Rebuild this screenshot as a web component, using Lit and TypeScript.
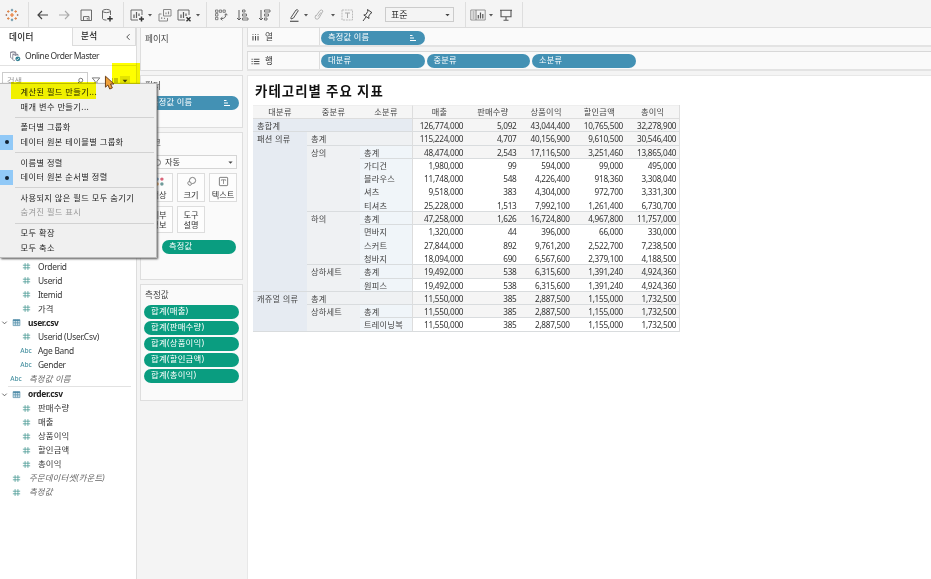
import { LitElement, html, svg, css, nothing } from "lit";
import { customElement, property } from "lit/decorators.js";
import { classMap } from "lit/directives/class-map.js";

const G = "#5c5c5c";

const icons: Record<string, unknown> = {
  logo: svg`<g stroke="#e8762d" stroke-width="1.100"><path d="M8 6v4M6 8h4"/></g>
    <g stroke="#5b879b" stroke-width="1"><path d="M8 1.800v2.600M6.800 3.100h2.400M8 11.600v2.600M6.800 12.900h2.400"/></g>
    <g stroke="#e0864a" stroke-width="1"><path d="M4.300 3.200v2.600M3 4.500h2.600M11.700 3.200v2.600M10.400 4.500h2.600M4.300 10.200v2.600M3 11.500h2.600M11.700 10.200v2.600M10.400 11.500h2.600"/></g>
    <g stroke="#a87f70" stroke-width="1"><path d="M2.400 7v2M1.600 8h1.600M13.600 7v2M12.800 8h1.600"/></g>`,
  back: svg`<path d="M13 8H3M7 4L3 8l4 4" stroke="#444" stroke-width="1.200"/>`,
  fwd: svg`<path d="M3 8h10M9 4l4 4-4 4" stroke="#aaa" stroke-width="1.100"/>`,
  save: svg`<path d="M3 3h10.500v10.500H3zM5.500 13.200v-3.600h5.500v3.600M9.300 11v1.500" stroke="${G}" stroke-width=".9"/>`,
  db: svg`<path d="M3.500 4v7.500c0 1 2 1.600 4 1.600M11.500 4v4" stroke="${G}" stroke-width=".9"/><ellipse cx="7.500" cy="4" rx="4" ry="1.600" stroke="${G}" stroke-width=".9"/><path d="M11 9v5.400M8.300 11.700h5.400" stroke="#333" stroke-width="1.400"/>`,
  chartPlus: svg`<path d="M13 8V3H2v10h7" stroke="${G}" stroke-width=".9"/><path d="M5 11V7.500M7.500 11V5M10 9V6.500" stroke="${G}" stroke-width="1.200"/><path d="M12.500 9.400v5M10 12h5" stroke="#333" stroke-width="1.500"/>`,
  dup: svg`<path d="M6.500 2.500h7.500v6.500H6.500zM4.500 7H2v7h8.500V11" stroke="#888"/><path d="M9 7.300V5.500M11.500 7.300V4.500M4.700 12v-1.800M7.500 12V10.800" stroke="#888" stroke-width="1.100"/>`,
  chartX: svg`<path d="M13 8V3H2v10h7" stroke="${G}" stroke-width=".9"/><path d="M5 11V7.500M7.500 11V5M10 9V6.500" stroke="${G}" stroke-width="1.200"/><path d="M10.500 10.200l4 4M14.500 10.200l-4 4" stroke="#333" stroke-width="1.400"/>`,
  swap: svg`<path d="M2.500 3h2.400v2.300H2.500zM6.300 3h2.300v2.300H6.300zM10 3h2.300v2.300H10zM2.500 6.600h2.400V9H2.500zM2.500 10.300h2.400v2.400H2.500z" stroke="#666" stroke-width=".8"/><path d="M13 7c0 3-1.500 4.700-5 4.700M11.600 8.200L13 6.600l1.400 1.600M9.400 10.200L7.600 11.700l1.800 1.600" stroke="#666"/>`,
  sortAsc: svg`<path d="M4 3v10M2 11l2 2 2-2" stroke="${G}"/><path d="M7.500 3h2.500v2H7.500zM7.500 7h4v2h-4zM7.500 11h5.500v2H7.500z" stroke="#666" stroke-width=".9"/>`,
  sortDesc: svg`<path d="M4 3v10M2 11l2 2 2-2" stroke="${G}"/><path d="M7.500 3H13v2H7.500zM7.500 7h4v2h-4zM7.500 11H10v2H7.500z" stroke="#666" stroke-width=".9"/>`,
  pencil: svg`<path d="M5 10.500L10 3q1.400-.9 2.300.6L7.500 11 5 12z" stroke="#555"/><path d="M4 14.300h8.500" stroke="#555" stroke-width="1.200"/>`,
  clip: svg`<path d="M5 9l4-5.500q1.800-1.300 3 .5L8 11q-1.600 2-3.400.8Q3.300 10.400 5 8M7 9.500l3-4.200" stroke="#b5b5b5"/>`,
  text: svg`<path d="M3 3h10.500v10H3z" stroke="#bbb" stroke-dasharray="2 .8"/><path d="M6 6h5M8.500 6V11" stroke="#aaa"/>`,
  pin: svg`<path d="M8.500 2.500l4.500 3.200-1.300.5-2 3 .3 2.300L4.800 8l2-.4 2-3.200zM7 10l-3 4" stroke="#444"/>`,
  show: svg`<path d="M.8 3h14.400v10H.8z" stroke="#888" stroke-width=".9"/><path d="M2.500 5h2M2.500 7h2M2.500 9h2M2.500 11h2M6 3v10" stroke="#777" stroke-width=".9"/><path d="M8.300 11.500V8M10.500 11.500V5.500M12.800 11.500V7" stroke="#555" stroke-width="1.200"/>`,
  present: svg`<path d="M2 3.300h12M3 3.300v6.500h10V3.300M8 10v3M5.500 13.300h5" stroke="#555" stroke-width="1.100"/>`,
  caret: svg`<path d="M6 7h4L8 9.400z" fill="#555" stroke="none"/>`,
  caretBig: svg`<path d="M4.200 6h7.600L8 10.400z" fill="#444" stroke="none"/>`,
  chevL: svg`<path d="M10.500 3.500L6 8l4.500 4.500" stroke="#555" stroke-width="1.600"/>`,
  chevD: svg`<path d="M3 6l5 5 5-5" stroke="#555" stroke-width="2"/>`,
  source: svg`<path d="M2 3q3.500-2 7 0v5M2 3v7q1 1 3 1M2 3q3.500 1.800 7 0M5 6q3.500-1.500 7 0v2M5 6v7q1 1 3 1M5 6q3.500 1.800 7 0" stroke="#778"/><circle cx="11.800" cy="11.800" r="3.300" fill="#2f7f93" stroke="none"/><path d="M10 11.800l1.300 1.300 2.200-2.600" stroke="#fff"/>`,
  search: svg`<circle cx="9.500" cy="6.500" r="4" stroke="#555" stroke-width="1.500"/><path d="M6.500 9.500L2 14" stroke="#555" stroke-width="1.700"/>`,
  filter: svg`<path d="M2 3h12L9.500 8.500V14L6.500 12V8.500z" stroke="#555" stroke-width="1.200"/>`,
  list: svg`<path d="M2 4h2M2 8h2M2 12h2M6 4h8M6 8h8M6 12h8" stroke="#666" stroke-width="1.500"/>`,
  cols: svg`<path d="M3.500 5.500v8M8 5.500v8M12.500 5.500v8M3.500 2v1.700M8 2v1.700M12.500 2v1.700" stroke="#444" stroke-width="1.800"/>`,
  rows: svg`<path d="M1 4h2M1 8h2M1 12h2M5 4h10M5 8h10M5 12h10" stroke="#444" stroke-width="1.700"/>`,
  sortW: svg`<path d="M2 3h5M2 8h8M2 13h12" stroke="#fff" stroke-width="2.200"/>`,
  hash: svg`<path d="M5.500 2v12M10.500 2v12M1.500 5.700h13M1.500 10.300h13" stroke="#4a9a94" stroke-width="1.400"/>`,
  table: svg`<path d="M2 3h12v10.500H2zM2 8.500h12M6 3v10M10 3v10" stroke="#5b93ad" stroke-width="1.300" fill="#cfe2ea"/><path d="M2 4h12" stroke="#4685a3" stroke-width="2.200"/>`,
  color: svg`<g stroke="none"><circle cx="4.500" cy="4.500" r="2.500" fill="#5a8fc0"/><circle cx="11.500" cy="4.500" r="2.500" fill="#d9657a"/><circle cx="4.500" cy="11.500" r="2.500" fill="#e59a4a"/><circle cx="11.500" cy="11.500" r="2.500" fill="#6f9b9a"/></g>`,
  size: svg`<circle cx="9.500" cy="6.500" r="4.500" stroke="#666" stroke-width="1.200"/><path d="M5.300 7.500A3 3 0 1 0 8.300 12" stroke="#666" stroke-width="1.200"/>`,
  label: svg`<rect x="2" y="2" width="12" height="12" rx="1" stroke="#666" stroke-width="1.200"/><path d="M5 5.500h6M8 5.500V11.500M5 5.500v1.300M11 5.500v1.300" stroke="#666"/>`,
  cursor: svg`<path d="M3-1v13.500l3-2.700 2.300 5 3.200-1.400-2.200-4.800h4.200z" fill="#f0a13a" stroke="#6b3d14" stroke-width="1.200"/>`,
};

@customElement("ui-icon")
class UiIcon extends LitElement {
  @property() name = "";
  static styles = css`
    :host { display: inline-flex; flex: none; width: 14px; height: 14px; }
    svg { width: 100%; height: 100%; fill: none; overflow: visible; }
  `;
  render() {
    return html`<svg viewBox="0 0 16 16">${icons[this.name] ?? nothing}</svg>`;
  }
}

@customElement("field-pill")
class FieldPill extends LitElement {
  @property() label = "";
  @property({ type: Boolean }) sorted = false;
  static styles = css`
    :host {
      display: flex; align-items: center; justify-content: space-between; box-sizing: border-box;
      height: 14px; border-radius: 7px; padding: 0 8px 0 7px; color: #fff;
      background: #4391b4; line-height: 14px; white-space: nowrap; letter-spacing: .25px;
    }
    :host([measure]) { background: #0a9d80; }
    .lbl { position: relative; top: -1px; }
    ui-icon { width: 8px; height: 8px; }
  `;
  render() {
    return html`<span class="lbl">${this.label}</span>${this.sorted ? html`<ui-icon name="sortW"></ui-icon>` : nothing}`;
  }
}

const TOOLBAR = ["logo", "|", "back", "fwd", "save", "db", "|", "chartPlus", "caret", "dup", "chartX", "caret", "|",
  "swap", "sortAsc", "sortDesc", "|", "pencil", "caret", "clip", "caret", "text", "pin", "select", "|", "show", "caret", "present", "|"];

type MenuItem = { t: string; on?: boolean; off?: boolean } | null;
const MENU: MenuItem[] = [
  { t: "계산된 필드 만들기..." }, { t: "매개 변수 만들기..." }, null,
  { t: "폴더별 그룹화" }, { t: "데이터 원본 테이블별 그룹화", on: true }, null,
  { t: "이름별 정렬" }, { t: "데이터 원본 순서별 정렬", on: true }, null,
  { t: "사용되지 않은 필드 모두 숨기기" }, { t: "숨겨진 필드 표시", off: true }, null,
  { t: "모두 확장" }, { t: "모두 축소" },
];

const FIELDS: [string, string][] = [
  ["num lat", "Orderid"], ["num lat", "Userid"], ["num lat", "Itemid"], ["num", "가격"],
  ["group", "user.csv"], ["num lat", "Userid (User.Csv)"], ["abc lat", "Age Band"], ["abc lat", "Gender"], ["abc top", "측정값 이름"],
  ["line", ""], ["group", "order.csv"], ["num", "판매수량"], ["num", "매출"], ["num", "상품이익"], ["num", "할인금액"], ["num", "총이익"],
  ["num top", "주문데이터셋(카운트)"], ["num top", "측정값"],
];

// [first, second, third level, level at which the bottom rule starts, values]
const ROWS: [string, string, string, number, string][] = [
  ["총합계", "", "", 0, "126,774,000 5,092 43,044,400 10,765,500 32,278,900"],
  ["패션 의류", "총계", "", 1, "115,224,000 4,707 40,156,900 9,610,500 30,546,400"],
  ["", "상의", "총계", 2, "48,474,000 2,543 17,116,500 3,251,460 13,865,040"],
  ["", "", "가디건", 9, "1,980,000 99 594,000 99,000 495,000"],
  ["", "", "블라우스", 9, "11,748,000 548 4,226,400 918,360 3,308,040"],
  ["", "", "셔츠", 9, "9,518,000 383 4,304,000 972,700 3,331,300"],
  ["", "", "티셔츠", 1, "25,228,000 1,513 7,992,100 1,261,400 6,730,700"],
  ["", "하의", "총계", 2, "47,258,000 1,626 16,724,800 4,967,800 11,757,000"],
  ["", "", "면바지", 9, "1,320,000 44 396,000 66,000 330,000"],
  ["", "", "스커트", 9, "27,844,000 892 9,761,200 2,522,700 7,238,500"],
  ["", "", "청바지", 1, "18,094,000 690 6,567,600 2,379,100 4,188,500"],
  ["", "상하세트", "총계", 2, "19,492,000 538 6,315,600 1,391,240 4,924,360"],
  ["", "", "원피스", 0, "19,492,000 538 6,315,600 1,391,240 4,924,360"],
  ["캐쥬얼 의류", "총계", "", 1, "11,550,000 385 2,887,500 1,155,000 1,732,500"],
  ["", "상하세트", "총계", 2, "11,550,000 385 2,887,500 1,155,000 1,732,500"],
  ["", "", "트레이닝복", 0, "11,550,000 385 2,887,500 1,155,000 1,732,500"],
];
const HEAD = ["대분류", "중분류", "소분류", "매출", "판매수량", "상품이익", "할인금액", "총이익"];

@customElement("app-root")
class AppRoot extends LitElement {
  static styles = css`
    :host {
      display: flex; flex-direction: column; position: relative; width: 931px; height: 579px; overflow: hidden;
      background: #f4f4f4; color: #333; font: 8.2px/14px "Noto Sans", "Noto Sans CJK KR", sans-serif; white-space: nowrap;
    }
    * { box-sizing: border-box; }
    .toolbar {
      flex: none; height: 28px; display: grid; align-items: center; justify-items: center; padding-top: 2px;
      border-bottom: 1px solid #dcdcdc; background: #f4f4f4;
      grid-template-columns: 24px 8px 22px 20px 23px 20px 12px 15px 12px 17px 21px 8px 9px 19px 25px 19px 10px 20px 4px 22px 6px 22px 18px 87px 4px 22px 4px 26px 6px;
    }
    .toolbar > ui-icon { width: 16px; height: 16px; }
    .sep { width: 1px; height: 25px; background: #dedede; }
    .fit { width: 69px; height: 15px; border: 1px solid #ccc; display: flex; align-items: center; justify-content: space-between; padding: 0 1px 0 5px; font-size: 9px; }
    .fit ui-icon { width: 9px; }
    .body { flex: 1; display: flex; min-height: 0; }

    .data { width: 137px; background: #fff; border-right: 1px solid #ddd; display: flex; flex-direction: column; }
    .tabs { display: flex; height: 18px; }
    .tab { width: 72px; padding: 1px 0 0 9px; line-height: 17px; font-size: 8.600px; font-weight: 500; color: #222; letter-spacing: .3px; }
    .tab.off { flex: 1; background: #f8f8f8; border: 1px solid #dcdcdc; border-top: 0; display: flex; align-items: center; justify-content: space-between; padding: 0 2px 0 8px; }
    .tab ui-icon { width: 10px; height: 10px; }
    .source { height: 20px; border-bottom: 1px solid #e2e2e2; display: flex; align-items: center; padding: 1px 0 0 9px; gap: 4px; font-size: 8.500px; letter-spacing: -.42px; }
    .source ui-icon { width: 12px; height: 12px; }
    .find { display: flex; align-items: center; height: 19px; margin: 5px 0 0 2px; gap: 3px; }
    .box { width: 86px; height: 17px; border: 1px solid #ccc; padding: 0 3px 0 4px; display: flex; align-items: center; justify-content: space-between; color: #999; }
    .find ui-icon { width: 8px; height: 8px; }
    .find .flt { width: 10px; height: 10px; margin-right: 7px; }
    .find .dd { width: 10px; height: 10px; margin-left: -2px; background: #e4e4e4; }
    .tree { margin-top: 169.500px; display: flex; flex-direction: column; }
    .f { height: 14px; display: grid; justify-items: center; align-items: center; font-size: 8.400px; letter-spacing: .15px; grid-template-columns: 14px 24px 1fr; }
    .f .name { justify-self: start; }
    .f.lat { letter-spacing: -.25px; }
    .f.top { grid-template-columns: 4px 24px 1fr; font-style: italic; color: #666; }
    .f.top .name { padding-left: 1px; }
    .f.group { grid-template-columns: 9px 15px 1fr; font-weight: 700; color: #222; letter-spacing: -.26px; }
    .f.group .name { padding-left: 4px; }
    .f ui-icon { width: 9px; height: 9px; }
    .f .chev { width: 7px; }
    .abctxt { font: 500 6.600px/14px "Noto Sans", sans-serif; color: #4f96a5; letter-spacing: 0; }
    .line { height: 1px; background: #e2e2e2; margin: 0 5px .5px 8px; }

    .cards { width: 110px; padding: 0 4px 0 3px; display: flex; flex-direction: column; gap: 4px; }
    .card { background: #fafafa; border: 1px solid #dedede; width: 103px; padding: 2px 3px; }
    .card > h4 { margin: 0 0 0 1px; font-weight: 400; font-size: 8.600px; line-height: 16px; color: #444; }
    .pages { height: 43px; border-top: 0; padding-top: 3px; }
    .filters { height: 53px; }
    .filters field-pill { margin-top: 2px; }
    .marks { height: 148px; }
    .mtype { height: 14px; margin: 4px 2px 0 1px; border: 1px solid #d5d5d5; display: flex; align-items: center; gap: 4px; padding: 0 1px 0 8px; background: #fcfcfc; }
    .mtype .o { width: 7px; height: 7px; border: 1px solid #777; border-radius: 4px; }
    .mtype ui-icon { margin-left: auto; width: 9px; height: 9px; }
    .btns { display: grid; grid-template-columns: repeat(3, 28px); gap: 4px; margin: 4px 0 0 1px; }
    .btn { height: 29px; border: 1px solid #ddd; background: #fdfdfd; display: flex; flex-direction: column; align-items: center; justify-content: center; line-height: 11px; gap: 2px; }
    .btn.two { height: 27px; gap: 0; line-height: 10px; }
    .btn ui-icon { width: 11px; height: 11px; }
    .marks field-pill { width: 74px; margin: 7px 0 0 18px; }
    .values { height: 117px; }
    .stack { display: flex; flex-direction: column; gap: 2px; margin: 2px 0 0 0; font-size: 8.400px; }

    .main { width: 684px; display: flex; flex-direction: column; }
    .shelf { display: flex; height: 19px; background: #fafafa; border-bottom: 2px solid #e3e3e3; }
    .shelf + .shelf { height: 20px; margin-top: 4px; border-top: 1px solid #d8d8d8; }
    .cap { width: 73px; border-right: 1px solid #ddd; border-left: 1px solid #ddd; display: flex; align-items: center; gap: 5px; padding: 1px 0 0 3px; font-size: 8.600px; }
    .shelf + .shelf .cap { padding-top: 1px; }
    .cap ui-icon { width: 9px; height: 9px; }
    .pills { display: flex; align-items: center; gap: 2px; padding: 2px 0 0 1px; }
    .shelf + .shelf .pills { padding-top: 1px; }
    .pills field-pill { width: 103.500px; }
    .sheet { flex: 1; margin-top: 4px; background: #fff; border: 1px solid #e8e8e8; border-right: 0; border-bottom: 0; padding: 7px 0 0 5px; }
    h1 { margin: 0; font: 700 13.400px/15px "Noto Sans CJK KR", sans-serif; letter-spacing: 1.080px; color: #111; padding-left: 2px; height: 22px; }
    .grid { width: 427px; display: grid; grid-template-columns: 54px 53px 53px repeat(5, 53.250px); grid-template-rows: 14px repeat(16, 13.300px); border-right: 1px solid #ddd; }
    .c { line-height: 13px; padding-left: 4px; color: #444; overflow: hidden; letter-spacing: .25px; }
    .c.h { text-align: center; padding: 0; background: #f5f5f5; border-bottom: 1px solid #ddd; border-top: 1px solid #eee; line-height: 12px; }
    .c0 { background: #e6ebf2; } .c1 { background: #eff1f3; } .c2 { background: #f0f5f9; }
    .c.h.c2, .c2 { border-right: 1px solid #ddd; }
    .c2.c1 { background: #eff1f3; } .c2.all, .all { background: #e6ebf2; }
    .c.num { text-align: right; padding: 0 3px 0 0; letter-spacing: -.27px; color: #333; }
    .tot { background: #f5f5f5; }
    .ul { border-bottom: 1px solid #d9dcde; }

    .menu { position: absolute; left: 0; top: 83px; width: 157px; height: 175px; background: #f0f0f0; border: 1px solid #bbb; border-left: 0; box-shadow: 1px 1px 2px #555; padding-top: 1px; color: #222; z-index: 1; letter-spacing: .42px; }
    .mi { height: 14.700px; line-height: 14.700px; display: grid; grid-template-columns: 13px 1fr; column-gap: 7.500px; }
    .mi.off { color: #999; }
    .mark { display: flex; align-items: center; justify-content: center; }
    .on .mark { background: #91c9f7; }
    .on .mark::before { content: ""; width: 4px; height: 4px; border-radius: 2px; background: #123; }
    .ms { height: 1px; margin: 2.450px 2px 2.450px 15px; background: #d2d2d2; }
    .hl { position: absolute; z-index: 2; background: #ffff00; mix-blend-mode: multiply; }
    .hl.a { left: 112px; top: 63px; width: 28px; height: 21px; }
    .hl.b { left: 11px; top: 82px; width: 85px; height: 17px; }
    .cursor { position: absolute; left: 103px; top: 77px; z-index: 4; width: 13px; height: 13px; }
  `;

  private tool(t: string) {
    if (t === "|") return html`<i class="sep"></i>`;
    if (t === "select") return html`<div class="fit">표준<ui-icon name="caretBig"></ui-icon></div>`;
    return html`<ui-icon name=${t}></ui-icon>`;
  }

  private field([kind, name]: [string, string]) {
    if (kind === "line") return html`<div class="line"></div>`;
    const [type] = kind.split(" ");
    const glyph = type === "abc" ? html`<span class="abctxt">Abc</span>`
      : html`<ui-icon name=${type === "group" ? "table" : "hash"}></ui-icon>`;
    return html`<div class="f ${kind}">
      ${type === "group" ? html`<ui-icon class="chev" name="chevD"></ui-icon>` : html`<span></span>`}${glyph}<span class="name">${name}</span>
    </div>`;
  }

  private row([a, b, c, rule, vals]: (typeof ROWS)[number]) {
    const grand = a === "총합계";
    const total = grand || b === "총계" || c === "총계";
    return html`${[a, b, c].map((t, i) => html`<div class=${classMap({
      c: true, c0: i === 0, c1: i === 1 || (i === 2 && b === "총계"), c2: i === 2, all: grand, ul: i >= rule,
    })}>${t}</div>`)}${vals.split(" ").map((v) => html`<div class=${classMap({ c: true, num: true, tot: total, ul: rule < 9 })}>${v}</div>`)}`;
  }

  render() {
    return html`
      <div class="toolbar">${TOOLBAR.map((t) => this.tool(t))}</div>
      <div class="body">
        <div class="data">
          <div class="tabs"><div class="tab">데이터</div><div class="tab off">분석<ui-icon name="chevL"></ui-icon></div></div>
          <div class="source"><ui-icon name="source"></ui-icon>Online Order Master</div>
          <div class="find">
            <div class="box">검색<ui-icon name="search"></ui-icon></div>
            <ui-icon class="flt" name="filter"></ui-icon><ui-icon name="list"></ui-icon><ui-icon class="dd" name="caretBig"></ui-icon>
          </div>
          <div class="tree">${FIELDS.map((f) => this.field(f))}</div>
        </div>
        <div class="cards">
          <div class="card pages"><h4>페이지</h4></div>
          <div class="card filters"><h4>필터</h4><field-pill label="측정값 이름" sorted></field-pill></div>
          <div class="card marks"><h4>마크</h4>
            <div class="mtype"><i class="o"></i>자동<ui-icon name="caretBig"></ui-icon></div>
            <div class="btns">
              <div class="btn"><ui-icon name="color"></ui-icon>색상</div>
              <div class="btn"><ui-icon name="size"></ui-icon>크기</div>
              <div class="btn"><ui-icon name="label"></ui-icon>텍스트</div>
              <div class="btn two"><span>세부</span><span>정보</span></div>
              <div class="btn two"><span>도구</span><span>설명</span></div>
            </div>
            <field-pill measure label="측정값"></field-pill>
          </div>
          <div class="card values"><h4>측정값</h4>
            <div class="stack">${["매출", "판매수량", "상품이익", "할인금액", "총이익"].map((m) => html`<field-pill measure label="합계(${m})"></field-pill>`)}</div>
          </div>
        </div>
        <div class="main">
          <div class="shelf"><div class="cap"><ui-icon name="cols"></ui-icon>열</div>
            <div class="pills"><field-pill label="측정값 이름" sorted></field-pill></div></div>
          <div class="shelf"><div class="cap"><ui-icon name="rows"></ui-icon>행</div>
            <div class="pills">${["대분류", "중분류", "소분류"].map((d) => html`<field-pill label=${d}></field-pill>`)}</div></div>
          <div class="sheet">
            <h1>카테고리별 주요 지표</h1>
            <div class="grid">${HEAD.map((h, i) => html`<div class=${classMap({ c: true, h: true, c2: i === 2 })}>${h}</div>`)}${ROWS.map((r) => this.row(r))}</div>
          </div>
        </div>
      </div>
      <div class="menu">${MENU.map((m) => m
        ? html`<div class=${classMap({ mi: true, on: !!m.on, off: !!m.off })}><span class="mark"></span><span>${m.t}</span></div>`
        : html`<div class="ms"></div>`)}</div>
      <div class="hl a"></div><div class="hl b"></div>
      <ui-icon class="cursor" name="cursor"></ui-icon>
    `;
  }
}
